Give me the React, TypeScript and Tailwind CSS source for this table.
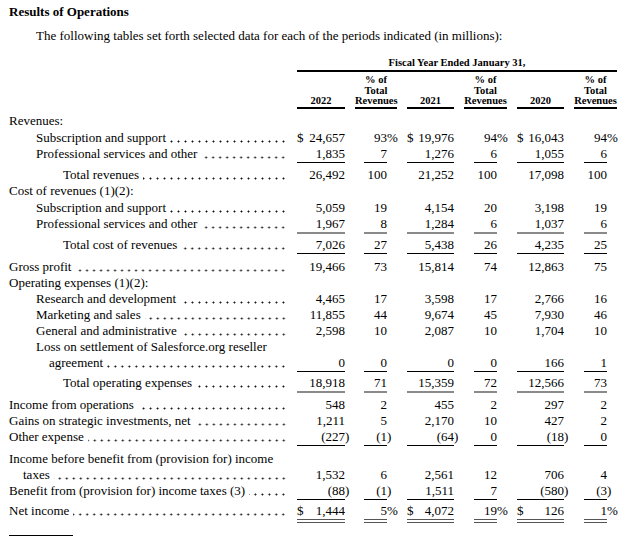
type Line = 'single' | 'grey' | 'double' | undefined;

interface RowDef {
  label: string;
  indent: string;
  values?: string[];
  line?: Line;
  mt?: string;
}

const GRID = 'grid grid-cols-[278px_48px_42px_47px_43px_47px_43px] gap-x-[10px]';

const lineClass: Record<string, string> = {
  single: 'border-b border-black',
  grey: 'border-b-2 border-[#8a8a8a]',
  double: 'border-b-4 border-double border-[#555]',
};

const L0 = 'pl-0';
const L1 = 'pl-[27px]';
const L2 = 'pl-[54px]';
const C0 = 'pl-[14px]';
const C1 = 'pl-[40px]';

const rows: RowDef[] = [
  { label: 'Revenues:', indent: L0, mt: 'mt-[4px]' },
  { label: 'Subscription and support', indent: L1, values: ['$24,657', '93%', '$19,976', '94%', '$16,043', '94%'], mt: 'mt-px' },
  { label: 'Professional services and other', indent: L1, values: ['1,835', '7', '1,276', '6', '1,055', '6'], line: 'single' },
  { label: 'Total revenues', indent: L2, values: ['26,492', '100', '21,252', '100', '17,098', '100'], mt: 'mt-1' },
  { label: 'Cost of revenues (1)(2):', indent: L0 },
  { label: 'Subscription and support', indent: L1, values: ['5,059', '19', '4,154', '20', '3,198', '19'], mt: 'mt-px' },
  { label: 'Professional services and other', indent: L1, values: ['1,967', '8', '1,284', '6', '1,037', '6'], line: 'grey' },
  { label: 'Total cost of revenues', indent: L2, values: ['7,026', '27', '5,438', '26', '4,235', '25'], line: 'single', mt: 'mt-[3px]' },
  { label: 'Gross profit', indent: L0, values: ['19,466', '73', '15,814', '74', '12,863', '75'], mt: 'mt-[5px]' },
  { label: 'Operating expenses (1)(2):', indent: L0 },
  { label: 'Research and development', indent: L1, values: ['4,465', '17', '3,598', '17', '2,766', '16'] },
  { label: 'Marketing and sales', indent: L1, values: ['11,855', '44', '9,674', '45', '7,930', '46'] },
  { label: 'General and administrative', indent: L1, values: ['2,598', '10', '2,087', '10', '1,704', '10'] },
  { label: 'Loss on settlement of Salesforce.org reseller', indent: L1 },
  { label: 'agreement', indent: C1, values: ['0', '0', '0', '0', '166', '1'], line: 'single' },
  { label: 'Total operating expenses', indent: L2, values: ['18,918', '71', '15,359', '72', '12,566', '73'], line: 'grey', mt: 'mt-[3px]' },
  { label: 'Income from operations', indent: L0, values: ['548', '2', '455', '2', '297', '2'], mt: 'mt-1' },
  { label: 'Gains on strategic investments, net', indent: L0, values: ['1,211', '5', '2,170', '10', '427', '2'] },
  { label: 'Other expense', indent: L0, values: ['(227)', '(1)', '(64)', '0', '(18)', '0'], line: 'single' },
  { label: 'Income before benefit from (provision for) income', indent: L0, mt: 'mt-[5px]' },
  { label: 'taxes', indent: C0, values: ['1,532', '6', '2,561', '12', '706', '4'] },
  { label: 'Benefit from (provision for) income taxes (3)', indent: L0, values: ['(88)', '(1)', '1,511', '7', '(580)', '(3)'], line: 'single' },
  { label: 'Net income', indent: L0, values: ['$1,444', '5%', '$4,072', '19%', '$126', '1%'], line: 'double', mt: 'mt-[3px]' },
];

const headers = [['2022'], ['% of', 'Total', 'Revenues'], ['2021'], ['% of', 'Total', 'Revenues'], ['2020'], ['% of', 'Total', 'Revenues']];

function split(v: string) {
  let dollar = false;
  let main = v;
  let hang = '';
  if (main.startsWith('$')) {
    dollar = true;
    main = main.slice(1);
  }
  if (main.endsWith('%') || main.endsWith(')')) {
    hang = main.slice(-1);
    main = main.slice(0, -1);
  }
  return { dollar, main, hang };
}

function Amount({ v, line }: { v: string; line: Line }) {
  const { dollar, main, hang } = split(v);
  return (
    <div className={`flex justify-between ${line ? lineClass[line] : ''}`}>
      <span>{dollar ? '$' : ''}</span>
      <span>
        {main}
        <span className="inline-block w-0">{hang}</span>
      </span>
    </div>
  );
}

function Percent({ v, line }: { v: string; line: Line }) {
  const { main, hang } = split(v);
  return (
    <div className="flex justify-end pr-[10px]">
      <div className={`w-[23px] text-right ${line ? lineClass[line] : ''}`}>
        {main}
        <span className="inline-block w-0">{hang}</span>
      </div>
    </div>
  );
}

function Row({ row }: { row: RowDef }) {
  return (
    <div className={`${GRID} leading-4 ${row.mt ?? ''}`}>
      <div className={`flex min-w-0 ${row.indent}`}>
        <span className="shrink-0 whitespace-nowrap">{row.label}</span>
        {row.values && (
          // dot leaders, aligned on a fixed pitch from the right edge
          <span className="ml-[4px] h-4 flex-1 bg-[radial-gradient(circle,#111_0.75px,transparent_1.25px)] bg-[length:7px_3px] bg-[position:right_0px_top_10px] bg-repeat-x" />
        )}
      </div>
      {row.values?.map((v, i) =>
        i % 2 === 0 ? <Amount key={i} v={v} line={row.line} /> : <Percent key={i} v={v} line={row.line} />
      )}
    </div>
  );
}

export default function App() {
  return (
    <div className="h-[542px] w-[624px] overflow-hidden bg-white pl-[9px] pt-[4px] font-['Liberation_Serif',serif] text-[13px] text-black">
      <h1 className="font-bold leading-4">Results of Operations</h1>
      <p className="mt-[8px] pl-[27px] leading-4">
        The following tables set forth selected data for each of the periods indicated (in millions):
      </p>

      {/* Column headings */}
      <div className="mt-[13px] grid grid-cols-[278px_320px] gap-x-[10px]">
        <div />
        <div className="border-b-2 border-black pb-[2px] text-center text-[10.5px] font-bold leading-[11px]">
          Fiscal Year Ended January 31,
        </div>
      </div>
      <div className={`${GRID} mt-[3px] text-center text-[10.5px] font-bold leading-[10.5px]`}>
        <div />
        {headers.map((h, i) => (
          <div key={i} className="flex flex-col justify-end border-b-2 border-black">
            {h.map(t => (
              <span key={t}>{t}</span>
            ))}
          </div>
        ))}
      </div>

      {rows.map((r, i) => (
        <Row key={i} row={r} />
      ))}

      <div className="mt-[12px] w-[64px] border-t border-black" />
    </div>
  );
}
